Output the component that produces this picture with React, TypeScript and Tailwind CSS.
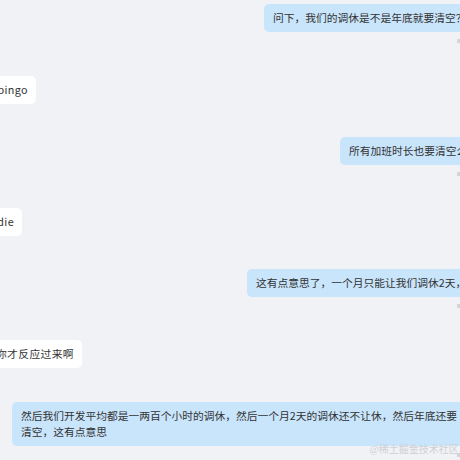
import React from "react";

type Msg = { id: number; side: "left" | "right"; text: string[]; edge: number; mt: string };

// edge: left bubble -> visible right edge, right bubble -> left edge
const messages: Msg[] = [
	{ id: 1, side: "right", text: ["问下，我们的调休是不是年底就要清空？"], edge: 264, mt: "mt-[4px]" },
	{ id: 2, side: "left", text: ["bingo"], edge: 36, mt: "mt-[44px]" },
	{ id: 3, side: "right", text: ["所有加班时长也要清空么？"], edge: 340, mt: "mt-[33px]" },
	{ id: 4, side: "left", text: ["die"], edge: 22, mt: "mt-[43px]" },
	{ id: 5, side: "right", text: ["这有点意思了，一个月只能让我们调休2天，"], edge: 247, mt: "mt-[33px]" },
	{ id: 6, side: "left", text: ["你才反应过来啊"], edge: 82, mt: "mt-[43px]" },
	{
		id: 7,
		side: "right",
		text: ["然后我们开发平均都是一两百个小时的调休，然后一个月2天的调休还不让休，然后年底还要", "清空，这有点意思"],
		edge: 12,
		mt: "mt-[34px]",
	},
];

const App = () => {
	return (
		<div className="relative w-[460px] h-[460px] overflow-hidden bg-[#f1f2f5] font-['Noto_Sans_CJK_SC',sans-serif] text-[10.75px] leading-[16px] text-[#333]">
			<div className="flex flex-col">
				{messages.map((m) =>
					m.side === "left" ? (
						<div key={m.id} className={`${m.mt} flex justify-end`} style={{ width: m.edge }}>
							<div className="shrink-0 whitespace-nowrap bg-white rounded-[5px] pl-[9px] pr-[8px] py-[6px] tracking-[0.4px]">
								{m.text[0]}
							</div>
						</div>
					) : (
						<div key={m.id} className={`${m.mt} relative`} style={{ paddingLeft: m.edge }}>
							<div className="w-max whitespace-nowrap bg-[#c9e5fb] rounded-[5px] px-[9px] py-[6px]">
								{m.text.map((line, i) => (
									<div key={i}>{line}</div>
								))}
							</div>
							{/* read mark, mostly off screen */}
							<span className="absolute right-0 -bottom-[11px] w-[3px] h-[4px] bg-[#d3d5da]" />
						</div>
					)
				)}
			</div>

			{/* watermark */}
			<div className="absolute right-[-4px] bottom-[2px] whitespace-nowrap font-['Liberation_Serif','Noto_Sans_CJK_SC',serif] text-[10px] text-[#cfd0d4]">
				@稀土掘金技术社区 j
			</div>
		</div>
	);
};

export default App;
